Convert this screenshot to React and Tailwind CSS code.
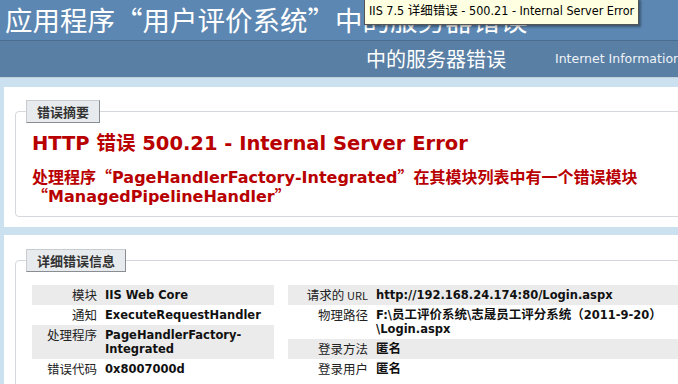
import React from "react";

const cjk = "font-['Noto_Sans_CJK_SC','Microsoft_YaHei',sans-serif]";
const verdana = "font-['DejaVu_Sans','Noto_Sans_CJK_SC',sans-serif]";

function Tab({ children }) {
  return (
    <legend className="-ml-[6px] h-[23px] px-[10px] bg-[#e8ebee] border border-[#c8ccd0] border-r-[#8a8e92] border-b-[#8a8e92] text-[13px] leading-[21px] font-bold text-[#333] font-['Noto_Sans_CJK_SC',sans-serif]">
      {children}
    </legend>
  );
}

function Row({ label, value, alt, labelW }) {
  return (
    <div className={`flex items-start py-[3px] ${alt ? "bg-[#ebebeb]" : ""}`}>
      <div
        className={`${labelW} shrink-0 text-right pr-[8px] text-[12.5px] leading-[14px] text-[#222] font-['Noto_Sans_CJK_SC',sans-serif]`}
      >
        {label}
      </div>
      <div className={`text-[11.5px] leading-[14px] font-bold text-[#111] whitespace-nowrap ${verdana}`}>
        {value}
      </div>
    </div>
  );
}

function Q({ children }) {
  return <span className="leading-none font-['Noto_Sans_CJK_SC',sans-serif]">{children}</span>;
}

function C({ children }) {
  return <span className="text-[12.5px] leading-none font-['Noto_Sans_CJK_SC',sans-serif]">{children}</span>;
}

export default function App() {
  const left = [
    ["模块", "IIS Web Core"],
    ["通知", "ExecuteRequestHandler"],
    ["处理程序", <>PageHandlerFactory-<br />Integrated</>],
    ["错误代码", "0x8007000d"],
  ];
  const right = [
    [<>请求的 <span className="text-[11px]">URL</span></>, "http://192.168.24.174:80/Login.aspx"],
    [
      "物理路径",
      <>
        F:\<C>员工评价系统</C>\<C>志晟员工评分系统（</C>2011-9-20<C>）</C>
        <br />\Login.aspx
      </>,
    ],
    ["登录方法", <C>匿名</C>],
    ["登录用户", <C>匿名</C>],
  ];

  return (
    <div className="relative w-[678px] h-[384px] overflow-hidden bg-[#cbe1ef]">
      {/* header */}
      <div className="h-[40px] bg-[#5c87b2] pl-[5px] flex items-center">
        <h1 className={`text-[27.5px] leading-none text-white whitespace-nowrap ${cjk}`}>
          应用程序“用户评价系统”中的服务器错误
        </h1>
      </div>
      <div className="h-[38px] bg-[#5a7fa5] border-t border-[#4a6c8e] border-b border-b-[#c1cfdd] flex items-center pl-[366px] whitespace-nowrap">
        <span className={`text-[20px] leading-none text-white ${cjk}`}>中的服务器错误</span>
        <span className="ml-[49px] text-[12.5px] text-[#eef3f8] font-['DejaVu_Sans',sans-serif]">
          Internet Information Services 7.5
        </span>
      </div>

      {/* summary */}
      <div className="ml-[4px] mt-[9px] bg-white pt-[13px] pb-[10px] pl-[11px] w-[700px]">
        <fieldset className="border border-[#d4d8dc] rounded-[4px] pl-[16px] pb-[10px] pr-0">
          <Tab>错误摘要</Tab>
          <h2 className="mt-[9px] text-[19.5px] leading-[24px] font-bold text-[#b80000] font-['DejaVu_Sans','Noto_Sans_CJK_SC',sans-serif] whitespace-nowrap">
            HTTP 错误 500.21 - Internal Server Error
          </h2>
          <p className="mt-[12px] text-[16px] leading-[18px] font-bold text-[#b80000] font-['DejaVu_Sans','Noto_Sans_CJK_SC',sans-serif] whitespace-nowrap">
            处理程序<Q>“</Q>PageHandlerFactory-Integrated<Q>”</Q>在其模块列表中有一个错误模块
            <br />
            <Q>“</Q>ManagedPipelineHandler<Q>”</Q>
          </p>
        </fieldset>
      </div>

      {/* details */}
      <div className="ml-[4px] mt-[8px] bg-white pt-[14px] pl-[11px] w-[700px] h-[200px]">
        <fieldset className="border border-[#d4d8dc] rounded-[4px] pl-[16px] pb-[10px] pr-0">
          <Tab>详细错误信息</Tab>
          <div className="flex gap-[14px] mt-[13px]">
            <div className="w-[242px] shrink-0">
              {left.map(([l, v], i) => (
                <Row key={i} label={l} value={v} alt={i % 2 === 0} labelW="w-[73px]" />
              ))}
            </div>
            <div className="w-[420px] shrink-0">
              {right.map(([l, v], i) => (
                <Row key={i} label={l} value={v} alt={i % 2 === 0} labelW="w-[88px]" />
              ))}
            </div>
          </div>
        </fieldset>
      </div>

      {/* tooltip */}
      <div className="absolute left-[364px] top-[-2px] h-[27px] px-[4px] bg-[#ffffe1] border border-[#555] shadow-[2px_2px_2px_rgba(0,0,0,0.35)] flex items-center whitespace-nowrap text-[12.5px] text-black font-['DejaVu_Sans_Condensed','Noto_Sans_CJK_SC',sans-serif]">
        IIS 7.5 详细错误 - 500.21 - Internal Server Error
      </div>

      {/* watermark */}
      <div className="absolute left-[540px] top-[350px] text-[20px] text-white/50 font-['DejaVu_Sans',sans-serif] whitespace-nowrap">
        www.anquanclub.cn
      </div>
    </div>
  );
}
